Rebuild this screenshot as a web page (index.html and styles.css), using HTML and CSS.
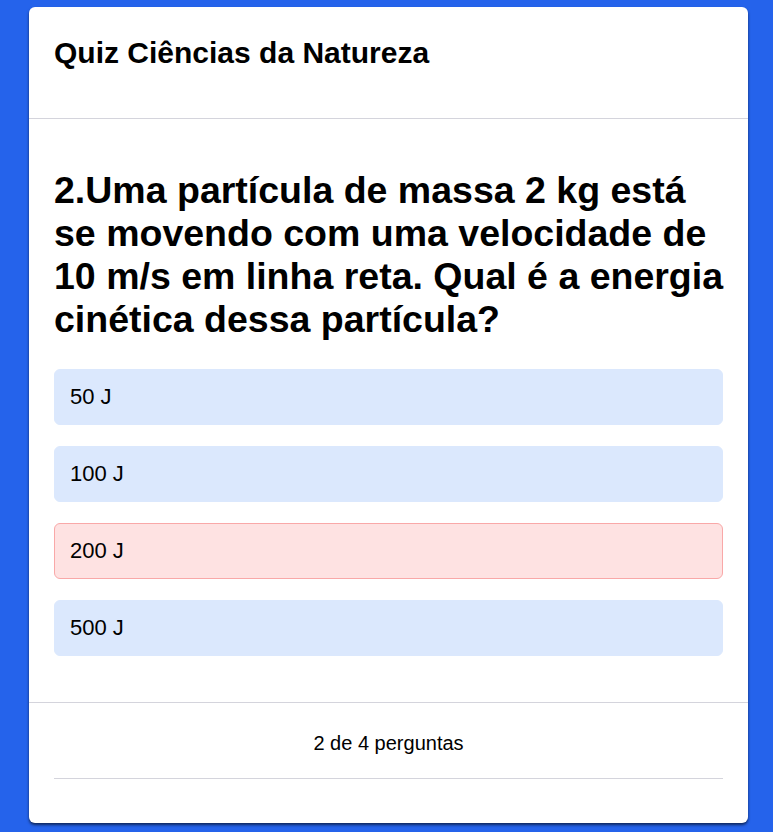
FILE: index.html
```html
<!DOCTYPE html>
<html lang="pt">
<head>
<meta charset="utf-8">
<title>Quiz Ciências da Natureza</title>
<link rel="stylesheet" href="styles.css">
</head>
<body>
<div class="card">
  <header class="card-header">
    <h1 class="title">Quiz Ciências da Natureza</h1>
  </header>
  <section class="card-body">
    <h2 class="question">2.Uma partícula de massa 2 kg está se movendo com uma velocidade de 10 m/s em linha reta. Qual é a energia cinética dessa partícula?</h2>
    <div class="options">
      <div class="option">50 J</div>
      <div class="option">100 J</div>
      <div class="option option-wrong">200 J</div>
      <div class="option">500 J</div>
    </div>
  </section>
  <footer class="card-footer">
    <p class="progress">2 de 4 perguntas</p>
    <div class="footer-line"></div>
  </footer>
</div>
</body>
</html>
```

FILE: styles.css
```css
* { box-sizing: border-box; }

html, body {
  margin: 0;
  padding: 0;
}

body {
  background: #2563eb;
  font-family: "Liberation Sans", Arial, sans-serif;
  color: #000;
  height: 832px;
  overflow: hidden;
}

.card {
  width: 719px;
  height: 816px;
  margin: 7px 0 0 29px;
  background: #fff;
  border-radius: 6px;
  box-shadow: 0 2px 3px rgba(0, 0, 0, 0.6);
  display: flex;
  flex-direction: column;
}

.card-header {
  padding: 28px 25px 47px;
  border-bottom: 1px solid #d4d4dc;
}

.title {
  margin: 0;
  font-size: 30px;
  line-height: 36px;
  font-weight: 700;
}

.card-body {
  padding: 50px 25px 46px;
  border-bottom: 1px solid #d4d4dc;
}

.question {
  margin: 0 -6px 0 0;
  font-size: 37.5px;
  line-height: 43px;
  font-weight: 700;
}

.options {
  margin-top: 28px;
  display: flex;
  flex-direction: column;
  gap: 21px;
}

.option {
  height: 56px;
  display: flex;
  align-items: center;
  padding: 0 15px;
  background: #dbe8fd;
  border: 1px solid #dbe8fd;
  border-radius: 6px;
  font-size: 22px;
}

.option-wrong {
  background: #fee2e2;
  border-color: #f9a8a8;
}

.card-footer {
  padding: 28px 25px 0;
}

.progress {
  margin: 0;
  text-align: center;
  font-size: 20px;
  line-height: 24px;
}

.footer-line {
  margin-top: 23px;
  border-top: 1px solid #d4d4dc;
}
```
